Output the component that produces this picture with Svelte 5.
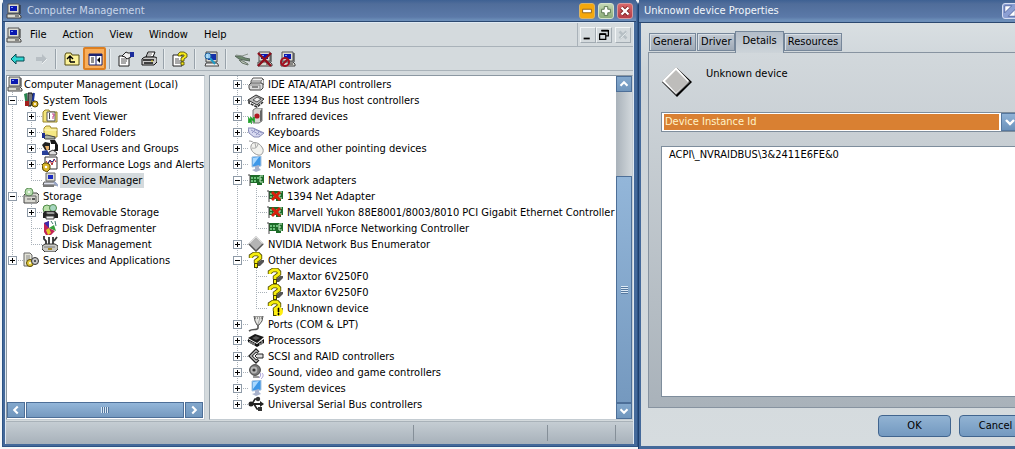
<script lang="ts">
  interface TreeNode {
    label: string;
    icon: string;
    state?: 'open' | 'closed';
    selected?: boolean;
    children?: TreeNode[];
  }

  const questionMark =
    '<path d="M8 12l5-4h3v2l-4 4H8z" fill="#555"/><path d="M3 6V4l3-2h4l2 2v2L8 9v2" fill="none" stroke="#4a4400" stroke-width="4.4"/><path d="M6 11h4v5H6z" fill="#4a4400"/><path d="M3 6V4l3-2h4l2 2v2L8 9v2" fill="none" stroke="#f6ee10" stroke-width="2.8"/><path d="M7 12h2v3H7z" fill="#f6ee10"/>';
  const card =
    '<path d="M2 3h14v8h-2v2H9v-2H2z" fill="#1d6b28"/><path d="M3 5h2v2H3zM6 5h2v2H6zM9 5h2v2H9zM3 8h2v2H3zM6 8h2v2H6z" fill="#6cc079"/><path d="M0 3h2v11" fill="none" stroke="#444"/><path d="M15 4h-3v6h3M12 7h2" fill="none" stroke="#c8f0c8"/>';
  const pc =
    '<path d="M2 1h11v9H2z" fill="#dcdcd4" stroke="#555"/><path d="M4 3h7v5H4z" fill="#0a18b0"/><path d="M5 4h2v1H5z" fill="#7f9cff"/><path d="M1 11h12l2 2v2H1z" fill="#d8d8d0" stroke="#444"/><path d="M9 13h4" stroke="#333"/><path d="M14 2v9" stroke="#222"/>';
  const disk =
    '<path d="M5 2h9l2 2v4l-2 1H3V5z" fill="#f0f0f0" stroke="#555"/><path d="M3 5h10v4M13 5l2-2" fill="none" stroke="#777"/><path d="M3 7h10l2 1v4l-2 2H2l-1-2V9z" fill="#ddd" stroke="#444"/><path d="M2 9h10v4" fill="none" stroke="#888"/><path d="M4 11h6" stroke="#333"/>';
  const monitor =
    '<path d="M4 1l9-1v10l-9 1z" fill="#3d97e8" stroke="#a9c3de"/><path d="M5 2l6-1-6 8z" fill="#a9d8ff"/><path d="M7 10l4-1v3l2 2-5 2-4-2 3-1z" fill="#a8b2cc"/>';

  const icons: Record<string, string> = {
    pc,
    disk,
    monitor,
    card,
    question: questionMark,
    cardOff: card + '<path d="M5 4l8 8M13 4l-8 8" stroke="#d8200c" stroke-width="2.8"/>',
    unknown:
      questionMark +
      '<circle cx="11.5" cy="11.5" r="4.5" fill="#ffee10"/><path d="M11 8h1v4h-1zM11 13h1v2h-1z" fill="#000" stroke="#000" stroke-width=".6"/>',
    tools:
      '<path d="M1 2l3-1 1 13H3z" fill="#27854e"/><path d="M5 1h4l1 4-2 9H5z" fill="#777" stroke="#111"/><path d="M11 1l-1 7 2 3" stroke="#1c35a0" stroke-width="2" fill="none"/><path d="M2 9h4v5H2z" fill="#a3201c"/><circle cx="12" cy="12" r="3" fill="#d8b22a" stroke="#5b4a00"/><circle cx="12" cy="12" r="1" fill="#fff"/>',
    events:
      '<path d="M1 4l2-2h4l1 2h7v10H1z" fill="#f3e57a" stroke="#97842a"/><path d="M5 4h8v9H5z" fill="#fff" stroke="#555"/><path d="M7 6h1M7 8h1M7 10h1" stroke="#111" stroke-width="1.4"/><path d="M10 6h2v2h-1v3" stroke="#c03c8c" fill="none"/>',
    folder:
      '<path d="M2 4l2-2h4l1 2h6v9H2z" fill="#f5e884" stroke="#a08a2c"/><path d="M2 6h13" stroke="#fff8c0"/><path d="M0 12l5-1 4 1 4 1v2H3z" fill="#a8b0a4" stroke="#444"/><path d="M0 9h3v5H0z" fill="#1b2d8f"/>',
    users:
      '<path d="M8 0h5l3 5v6h-5z" fill="#181818"/><path d="M9 4h4v5l-2 2-2-2z" fill="#fff"/><path d="M0 5l3-3 5 1v7H3z" fill="#222"/><path d="M3 6h4v3l-2 2z" fill="#e9b26a"/><path d="M0 11l5-1 3 5H0z" fill="#28409a"/><path d="M7 12l4-2 4 3-1 2H7z" fill="#dedede" stroke="#333"/>',
    perf:
      '<path d="M3 1h12v12H3z" fill="#fff" stroke="#333"/><path d="M4 5l2 3 2-4 2 5 2-6 2 3" stroke="#b3262c" fill="none"/><path d="M5 9l3-5 2 2 3-3" stroke="#23308f" fill="none"/><path d="M0 9l2-2h3l3 2v4l-3 3-4-2z" fill="#d9b52a" stroke="#5b4a00"/><circle cx="4" cy="11" r="1.3" fill="#fff"/>',
    device:
      '<path d="M4 1h9v8H4z" fill="#dcdcd4" stroke="#666"/><path d="M6 3h5v4H6z" fill="#1c2cc0"/><path d="M2 10h11l2 3H1z" fill="#dfe2ee" stroke="#555"/><path d="M1 14h11" stroke="#777" stroke-width="2"/><path d="M12 10l4 4" stroke="#98a6c8" stroke-width="2"/>',
    storage:
      '<path d="M3 5h11l2 2v6l-2 2H1V7z" fill="#d7d7d0" stroke="#444"/><circle cx="6" cy="4" r="4" fill="#b8dcb0" stroke="#60945a"/><circle cx="6" cy="4" r="1" fill="#fff"/><path d="M2 8h11v6M4 11h4" fill="none" stroke="#666"/><path d="M9 10h3v2H9z" fill="#555"/>',
    removable:
      '<circle cx="5" cy="5" r="4" fill="#b9e0a8" stroke="#4f8a48"/><circle cx="11" cy="4" r="3.5" fill="#a6d5c0" stroke="#4f8a48"/><path d="M3 7h10l3 3v4H1V9z" fill="#222"/><path d="M4 8h8l1 2H5zM4 12h8v3H4z" fill="#eee" stroke="#444"/>',
    defrag:
      '<path d="M2 3l5-2v7l6 3-4 4H4l-2-3z" fill="#c22456"/><path d="M2 3l5-2v7z" fill="#3c2cae"/><path d="M7 8l5-3 2 6z" fill="#36a03b"/><path d="M4 10l3-2 2 5-3 2z" fill="#e6c92a"/><path d="M9 1l2 3M13 1l1 5" stroke="#3f7b6c"/>',
    manage:
      '<path d="M2 0v3l2 2v3M7 1v7M11 1v7M15 1l-3 4" stroke="#333" stroke-width="1.8" fill="none"/><path d="M3 8h10l3 2v3l-3 3H3l-3-3v-3z" fill="#c9c9c4" stroke="#333"/><path d="M2 11h11" stroke="#777"/><path d="M6 13h4" stroke="#a5882a" stroke-width="2"/>',
    services:
      '<path d="M1 1h6l2 2v11H1z" fill="#e4e4d8" stroke="#666"/><path d="M3 4h4M3 6h4M3 8h3" stroke="#888"/><circle cx="7" cy="11" r="3.5" fill="#e1c93c" stroke="#5b4a00"/><circle cx="12" cy="9" r="3.5" fill="#c7c7c7" stroke="#333"/><circle cx="7" cy="11" r="1" fill="#fff"/><circle cx="12" cy="9" r="1" fill="#333"/>',
    firewire:
      '<path d="M0 8l8-5 8 4-7 6z" fill="#bdbdbd" stroke="#333"/><path d="M5 8l4-3 4 2-4 3z" fill="#eee" stroke="#555"/><path d="M1 9v2l8 4 6-5" stroke="#333" fill="none" stroke-width="1.6" stroke-dasharray="3 1"/>',
    infrared:
      '<path d="M5 2l3-2h6v13l-3 2H5z" fill="#d6d6d2" stroke="#777"/><path d="M12 3v11l2-2V1z" fill="#666"/><circle cx="9" cy="8" r="2.6" fill="#b01820"/><path d="M1 15v-4l2 3v-4l3 3V9" stroke="#1fa02a" stroke-width="1.7" fill="none"/>',
    keyboard:
      '<path d="M0 4l5 0 11 5-5 4H6l-5-4z" fill="#d7d9f0" stroke="#8488b4"/><path d="M3 6l9 5M6 5l8 4M4 9l4-4M8 11l4-4" stroke="#9296c4"/>',
    mouse:
      '<path d="M1 1c3 0 4 1 6 3" stroke="#999" fill="none"/><path d="M3 6c1-5 8-5 12 3 1 4-2 7-5 6-4-1-8-5-7-9z" fill="#f2f2ee" stroke="#999"/><path d="M4 8c4 1 5-1 6-4M8 8l-1-5" stroke="#aaa" fill="none"/>',
    diamond:
      '<path d="M8 0l8 8-8 8-8-8z" fill="#b4b4b4"/><path d="M1 8l7-7 7 7" stroke="#ddd" fill="none"/><path d="M1 8l7 7 7-7" stroke="#555" stroke-width="1.4" fill="none"/>',
    port:
      '<path d="M6 0h9l-1 5-3 4H9L7 5z" fill="#e4e4e0" stroke="#555"/><path d="M7 2h7" stroke="#444" stroke-dasharray="1 1"/><path d="M12 2l-2 6" stroke="#aaa"/><path d="M10 9v3c-1 3-5 0-9 3" stroke="#555" stroke-width="1.6" fill="none"/>',
    chip:
      '<path d="M0 6l7-4 9 3-7 6z" fill="#181818"/><path d="M4 6l4-2 4 2-4 2z" fill="#555"/><path d="M0 7l9 5 7-5v4l-7 4-9-5z" fill="#111"/><path d="M2 11v-2M4 12v-2M6 14v-3M12 14v-3M14 12v-3" stroke="#fff" stroke-width=".8"/>',
    scsi:
      '<path d="M11 4L8 1 1 8l7 7 3-3" fill="none" stroke="#222" stroke-width="1.4"/><path d="M10 5L8 4 4 8l4 4 2-1" fill="none" stroke="#444" stroke-width="1.4"/><path d="M7 8l2-2h6v4H9z" fill="#ddd" stroke="#222"/>',
    sound:
      '<circle cx="7" cy="6" r="5.4" fill="#777" stroke="#444"/><circle cx="6" cy="6" r="3.4" fill="#b4b4b4"/><circle cx="6" cy="6" r="1.6" fill="#333"/><path d="M5 12h6l1 2H5z" fill="#999"/><path d="M12 9c1 1 1 3-1 5M14 9c2 2 1 4-1 6" stroke="#a79cd6" fill="none"/>',
    usb:
      '<path d="M1 8h13" stroke="#222" stroke-width="2"/><path d="M12 5l4 3-4 3z" fill="#222"/><circle cx="3" cy="8" r="2.5" fill="#222"/><path d="M4 8l3-5h3M6 8l3 5h3" stroke="#222" stroke-width="1.6" fill="none"/><circle cx="10" cy="3" r="2.2" fill="#333"/><path d="M10 11h4v4h-4z" fill="#333"/>',
    back: '<path d="M1 8l5-5v3h8v4H6v3z" fill="#2fd7d3" stroke="#064a52"/>',
    forward: '<path d="M14 8L9 3v3H3v4h6v3z" fill="#b8bfc4"/><path d="M9 13l5-5" stroke="#eef1f2"/>',
    up: '<path d="M1 4l1-2h5l1 2h7v10H1z" fill="#fbf29a" stroke="#554c10"/><path d="M6 11V6M3 8l3-3 3 3M6 11h5" fill="none" stroke="#000" stroke-width="1.4"/>',
    panes:
      '<path d="M2 3h13v11H2z" fill="#fff" stroke="#1b2270"/><path d="M2 4h13" stroke="#1b2270" stroke-width="2"/><path d="M9 4v10" stroke="#1b2270"/><path d="M4 7h3M4 9h3M4 11h3" stroke="#222"/><path d="M13 6v6l-3-3z" fill="#000"/>',
    properties:
      '<path d="M1 5h10v10H1z" fill="#fff" stroke="#222"/><path d="M3 8h6M3 10h6M3 12h5" stroke="#555"/><path d="M4 5l4-4 2 1h3v4l-4 2-2-2z" fill="#eee" stroke="#222"/><path d="M12 1h4v5h-4z" fill="#1b2c9c"/>',
    print:
      '<path d="M5 6l2-5h7l-2 5z" fill="#fff" stroke="#111"/><path d="M2 7l2-1h10l2 1v4l-3 3H1V8z" fill="#c9c9c9" stroke="#111"/><path d="M2 9h11M3 12h9" stroke="#111" stroke-width="1.5"/><path d="M10 10h2" stroke="#e8d420"/><path d="M7 3h4M6 5h4" stroke="#777"/>',
    help:
      '<path d="M1 4h9v11H1z" fill="#fff" stroke="#222"/><path d="M3 8h4M3 10h6M3 12h6" stroke="#555"/><path d="M6 5V3l2-2h4l3 2v3l-3 2v2H9V7l3-2V4H9v1zM9 11h3v3H9z" fill="#f6ea1c" stroke="#4d4600" stroke-width=".8"/>',
    scan:
      '<path d="M3 1h11v10H3z" fill="#dcdcd4" stroke="#444"/><path d="M5 3h8v6H5z" fill="#1430a8"/><path d="M3 12h11l2 3H2z" fill="#eee" stroke="#444"/><circle cx="5" cy="5" r="3" fill="#a8e0ff" fill-opacity=".85" stroke="#1d5f9c"/><path d="M7 7l5 6" stroke="#1d9cc8" stroke-width="2"/>',
    enable:
      '<path d="M1 5h6l4 2 5 1v2l-6-1-5-1z" fill="#6d8a6d" stroke="#56665a"/><path d="M5 9l4 1 5 3v1l-6-2z" fill="#bfc8bb" stroke="#69766a"/><path d="M2 4l6 1 6-2" stroke="#8a948c" fill="none"/>',
    remove: pc + '<path d="M1 2l13 13M14 2L1 15" stroke="#8e0f1c" stroke-width="2.4"/>',
    disable: pc + '<circle cx="5" cy="11" r="4" fill="none" stroke="#a01020" stroke-width="2"/><path d="M2 14l6-6" stroke="#a01020" stroke-width="2"/>',
    left: '<path d="M10 4L6 8l4 4" fill="none" stroke="#fff" stroke-width="2.4"/>',
    right: '<path d="M6 4l4 4-4 4" fill="none" stroke="#fff" stroke-width="2.4"/>',
    chevronUp: '<path d="M4 10l4-4 4 4" fill="none" stroke="#fff" stroke-width="2.4"/>',
    chevronDown: '<path d="M4 6l4 4 4-4" fill="none" stroke="#fff" stroke-width="2.4"/>',
    minus: '<path d="M3 6h10v4H3z" fill="#fff" stroke="#8a5a10"/>',
    plus: '<path d="M6 3h4v3h3v4h-3v3H6v-3H3V6h3z" fill="#fff" stroke="#4d6b45"/>',
    cross: '<path d="M4 4l8 8M12 4l-8 8" stroke="#7a2020" stroke-width="4.6"/><path d="M4 4l8 8M12 4l-8 8" stroke="#fff" stroke-width="2.8"/>',
    mdiMin: '<path d="M3 11h7v2H3z" fill="#000"/>',
    mdiRestore: '<path d="M5 3h8v6h-3M3 7h7v6H3z" fill="none" stroke="#000" stroke-width="1.4"/><path d="M5 3h8M3 7h7" stroke="#000" stroke-width="2"/>',
    mdiClose: '<path d="M4 4l8 8M12 4l-8 8" stroke="#b6bfc4" stroke-width="3"/><path d="M5 12l7-7" stroke="#eef2f3"/>',
    contextHelp: '<path d="M2 2h8l-8 8zM14 6v8H6z" fill="#fff" stroke="#4b5f9c"/>'
  };

  const consoleTree: TreeNode[] = [
    {
      label: 'System Tools',
      icon: 'tools',
      state: 'open',
      children: [
        {label: 'Event Viewer', icon: 'events', state: 'closed'},
        {label: 'Shared Folders', icon: 'folder', state: 'closed'},
        {label: 'Local Users and Groups', icon: 'users', state: 'closed'},
        {label: 'Performance Logs and Alerts', icon: 'perf', state: 'closed'},
        {label: 'Device Manager', icon: 'device', selected: true}
      ]
    },
    {
      label: 'Storage',
      icon: 'storage',
      state: 'open',
      children: [
        {label: 'Removable Storage', icon: 'removable', state: 'closed'},
        {label: 'Disk Defragmenter', icon: 'defrag'},
        {label: 'Disk Management', icon: 'manage'}
      ]
    },
    {label: 'Services and Applications', icon: 'services', state: 'closed'}
  ];

  const deviceTree: TreeNode[] = [
    {label: 'IDE ATA/ATAPI controllers', icon: 'disk', state: 'closed'},
    {label: 'IEEE 1394 Bus host controllers', icon: 'firewire', state: 'closed'},
    {label: 'Infrared devices', icon: 'infrared', state: 'closed'},
    {label: 'Keyboards', icon: 'keyboard', state: 'closed'},
    {label: 'Mice and other pointing devices', icon: 'mouse', state: 'closed'},
    {label: 'Monitors', icon: 'monitor', state: 'closed'},
    {
      label: 'Network adapters',
      icon: 'card',
      state: 'open',
      children: [
        {label: '1394 Net Adapter', icon: 'cardOff'},
        {label: 'Marvell Yukon 88E8001/8003/8010 PCI Gigabit Ethernet Controller', icon: 'cardOff'},
        {label: 'NVIDIA nForce Networking Controller', icon: 'card'}
      ]
    },
    {label: 'NVIDIA Network Bus Enumerator', icon: 'diamond', state: 'closed'},
    {
      label: 'Other devices',
      icon: 'question',
      state: 'open',
      children: [
        {label: 'Maxtor 6V250F0', icon: 'question'},
        {label: 'Maxtor 6V250F0', icon: 'question'},
        {label: 'Unknown device', icon: 'unknown'}
      ]
    },
    {label: 'Ports (COM & LPT)', icon: 'port', state: 'closed'},
    {label: 'Processors', icon: 'chip', state: 'closed'},
    {label: 'SCSI and RAID controllers', icon: 'scsi', state: 'closed'},
    {label: 'Sound, video and game controllers', icon: 'sound', state: 'closed'},
    {label: 'System devices', icon: 'monitor', state: 'closed'},
    {label: 'Universal Serial Bus controllers', icon: 'usb', state: 'closed'}
  ];

  const menus = ['File', 'Action', 'View', 'Window', 'Help'];

  const toolGroups = [
    ['back', 'forward'],
    ['up', 'panes'],
    ['properties', 'print'],
    ['help'],
    ['scan'],
    ['enable', 'remove', 'disable']
  ];

  const tabs = ['General', 'Driver', 'Details', 'Resources'];
  let activeTab = $state('Details');
  let instanceId = $state('ACPI\\_NVRAIDBUS\\3&2411E6FE&0');
</script>

{#snippet icon(name: string)}
  <svg class="icon" viewBox="0 0 16 16" aria-hidden="true">{@html icons[name]}</svg>
{/snippet}

{#snippet tree(nodes: TreeNode[])}
  <ul class="tree">
    {#each nodes as node}
      <li>
        <div class="node">
          <span class="branch">
            {#if node.state}
              <button class="expander" class:closed={node.state === 'closed'} aria-label="Toggle {node.label}"></button>
            {/if}
          </span>
          {@render icon(node.icon)}
          <span class="label" class:selected={node.selected}>{node.label}</span>
        </div>
        {#if node.children}
          {@render tree(node.children)}
        {/if}
      </li>
    {/each}
  </ul>
{/snippet}

<div class="desktop">
  <section class="window console">
    <header class="titlebar">
      {@render icon('pc')}
      <h1>Computer Management</h1>
      <button class="caption minimize" aria-label="Minimize">{@render icon('minus')}</button>
      <button class="caption maximize" aria-label="Maximize">{@render icon('plus')}</button>
      <button class="caption close" aria-label="Close">{@render icon('cross')}</button>
    </header>

    <div class="client">
      <nav class="menubar">
        {@render icon('pc')}
        {#each menus as menu}
          <button class="menu">{menu}</button>
        {/each}
        <div class="mdi">
          <button aria-label="Minimize view">{@render icon('mdiMin')}</button>
          <button aria-label="Restore view">{@render icon('mdiRestore')}</button>
          <button class="mdi-close" aria-label="Close view" disabled>{@render icon('mdiClose')}</button>
        </div>
      </nav>

      <div class="toolbar">
        {#each toolGroups as group}
          <div class="group">
            {#each group as tool}
              <button class="tool" class:pressed={tool === 'panes'} aria-label={tool}>{@render icon(tool)}</button>
            {/each}
          </div>
        {/each}
      </div>

      <div class="panes">
        <div class="pane scope">
          <div class="node root">
            {@render icon('pc')}
            <span class="label">Computer Management (Local)</span>
          </div>
          {@render tree(consoleTree)}
          <div class="scrollbar horizontal">
            <button class="arrow" aria-label="Scroll left">{@render icon('left')}</button>
            <div class="thumb"><span class="grip"></span></div>
            <button class="arrow" aria-label="Scroll right">{@render icon('right')}</button>
          </div>
        </div>

        <div class="pane result">
          <div class="devices">
            {@render tree(deviceTree)}
          </div>
          <div class="scrollbar vertical">
            <button class="arrow" aria-label="Scroll up">{@render icon('chevronUp')}</button>
            <div class="track"></div>
            <div class="thumb"><span class="grip"></span></div>
            <button class="arrow" aria-label="Scroll down">{@render icon('chevronDown')}</button>
          </div>
        </div>
      </div>

      <footer class="statusbar">
        <span class="status-main"></span>
        <span class="status-mid"></span>
        <span class="status-side"></span>
        <span class="status-grip"></span>
      </footer>
    </div>
  </section>

  <section class="window dialog">
    <header class="titlebar">
      <h2>Unknown device Properties</h2>
      <button class="caption context" aria-label="Help">{@render icon('contextHelp')}</button>
      <button class="caption close" aria-label="Close">{@render icon('cross')}</button>
    </header>

    <div class="sheet">
      <div class="tabs" role="tablist">
        {#each tabs as tab}
          <button
            class="tab"
            class:active={tab === activeTab}
            role="tab"
            aria-selected={tab === activeTab}
            onclick={() => (activeTab = tab)}>{tab}</button>
        {/each}
      </div>

      <div class="page" role="tabpanel">
        <div class="device">
          <svg class="device-icon" viewBox="0 0 32 32" aria-hidden="true">
            <path d="M16 2l15 14-15 15L1 16z" fill="#000" />
            <path d="M15 1l14 15-14 13L1 15z" fill="#777" />
            <path d="M15 1l13 14-13 13L1 15z" fill="#fff" />
            <path d="M15 4l12 12-12 11L4 15z" fill="#bebdbb" />
          </svg>
          <span>Unknown device</span>
        </div>

        <div class="combo">
          <select aria-label="Property">
            <option>Device Instance Id</option>
          </select>
          <span class="drop">{@render icon('chevronDown')}</span>
        </div>

        <textarea aria-label="Value" readonly spellcheck="false" bind:value={instanceId}></textarea>
      </div>

      <div class="actions">
        <button>OK</button>
        <button>Cancel</button>
      </div>
    </div>
  </section>
</div>

<style>
  :global(body) {
    background: #f4f7f9;
    color: #000;
    font-family: 'DejaVu Sans Condensed', 'DejaVu Sans', sans-serif;
    font-size: 11px;
    line-height: 16px;
    overflow: hidden;
  }

  button,
  select,
  textarea {
    border: none;
    border-radius: 0;
    color: inherit;
    font: inherit;
    margin: 0;
    padding: 0;
  }

  button {
    background: none;
  }

  .desktop {
    display: flex;
    padding-left: 2px;
  }

  .icon {
    display: block;
    flex: none;
    height: 16px;
    width: 16px;
  }

  .window {
    background: #44699a;
    box-sizing: border-box;
    display: flex;
    flex-direction: column;
  }

  .console {
    border: solid #2d5486;
    border-width: 0 1px 1px;
    border-radius: 5px 5px 0 0;
    flex: 1;
    margin-bottom: 2px;
    min-width: 0;
    padding: 0 3px 2px 2px;
  }

  /* the dialog hangs over the right edge of the screen */
  .dialog {
    border-left: 1px solid #1f3f6d;
    border-radius: 5px 5px 0 0;
    flex: 0 0 404px;
    margin-right: -27px;
    padding: 0 2px 3px;
  }

  .titlebar {
    align-items: center;
    background: linear-gradient(#3e6193 0, #506d9a 4px, #5b79a8 17px, #6b8db8 20px);
    border-bottom: 1px solid #2b4870;
    box-sizing: border-box;
    display: flex;
    flex: none;
    gap: 3px;
    height: 22px;
    margin: 0 -2px;
    padding: 0 3px;
  }

  .dialog .titlebar {
    height: 23px;
    padding-right: 5px;
  }

  h1,
  h2 {
    color: #c8d5e8;
    flex: 1;
    font-size: 11px;
    font-weight: normal;
    margin: 0;
    padding-left: 2px;
  }

  h2 {
    color: #f2f6fb;
  }

  .caption {
    border: 1px solid #6d6a58;
    border-radius: 3px;
    box-sizing: border-box;
    height: 16px;
    width: 16px;
  }

  .caption .icon {
    height: 14px;
    width: 14px;
  }

  .minimize {
    background: #f5a80c;
    border-color: #d8b46a;
  }

  .maximize {
    background: linear-gradient(#c3d8b4, #8bab78);
    border-color: #d4e2cb;
  }

  .close {
    background: linear-gradient(#d9686a, #b63c46);
    border-color: #d59a9f;
  }

  .context {
    background: #8b9fd3;
    border-color: #d5ddf2;
  }

  .client {
    background: #d4dadd;
    border: 1px solid #dfe9f2;
    border-bottom: none;
    display: flex;
    flex: 1;
    flex-direction: column;
  }

  .menubar,
  .toolbar {
    align-items: center;
    border-bottom: 1px solid #a9b2b9;
    box-sizing: border-box;
    display: flex;
    height: 24px;
  }

  .menubar {
    padding: 0 2px 0 0;
  }

  .menu {
    padding: 0 8px;
  }

  .mdi {
    align-items: center;
    align-self: stretch;
    border-left: 1px solid #a9b2b9;
    display: flex;
    margin-left: auto;
    padding-left: 2px;
  }

  .mdi button {
    border: 1px solid;
    border-color: #f2f5f6 #a2abb2 #a2abb2 #f2f5f6;
    box-sizing: border-box;
    height: 16px;
    overflow: hidden;
    width: 16px;
  }

  .mdi .icon {
    height: 14px;
    width: 14px;
  }

  .mdi .mdi-close {
    margin-left: 3px;
  }

  .group {
    align-items: center;
    display: flex;
  }

  .group + .group::before {
    background: #98a2aa;
    border-right: 1px solid #e8edef;
    content: '';
    height: 20px;
    margin: 0 3px;
    width: 1px;
  }

  .tool {
    align-items: center;
    box-sizing: border-box;
    display: flex;
    height: 23px;
    justify-content: center;
    width: 23px;
  }

  .tool.pressed {
    background: #f9ae5a;
    border: 2px solid #dc7f22;
    border-radius: 2px;
  }

  .panes {
    display: flex;
    flex: 1;
    gap: 4px;
    padding: 4px 0 1px;
  }

  .pane {
    background: #fff;
    border: 1px solid;
    border-color: #8c98a2 #c4ccd2 #c4ccd2 #8c98a2;
    box-sizing: border-box;
    display: flex;
  }

  .scope {
    flex: 0 0 199px;
    flex-direction: column;
    min-width: 0;
    white-space: nowrap;
  }

  .scope .tree {
    padding-left: 1px;
  }

  .scope .tree .tree {
    padding-left: 19px;
  }

  .result {
    flex: 1;
    min-width: 0;
  }

  .devices {
    flex: 1;
    min-width: 0;
    overflow: hidden;
    padding: 0 0 7px 23px;
    white-space: nowrap;
  }

  .tree {
    list-style: none;
    margin: 0;
    padding: 0;
  }

  .tree .tree {
    padding-left: 19px;
  }

  /* dotted guide running down the middle of the expander column */
  li {
    background: repeating-linear-gradient(#a8b0b8 0 1px, transparent 1px 2px) 4px 0 / 1px 100% no-repeat;
  }

  li:last-child {
    background-size: 1px 8px;
  }

  .node {
    align-items: center;
    display: flex;
    height: 16px;
  }

  .branch {
    align-items: center;
    background: repeating-linear-gradient(90deg, #a8b0b8 0 1px, transparent 1px 2px) 4px 8px / 11px 1px no-repeat;
    display: flex;
    flex: none;
    height: 16px;
    width: 15px;
  }

  .expander {
    background:
      linear-gradient(#000, #000) center / 5px 1px no-repeat,
      #fff;
    border: 1px solid #8f9ba8;
    box-sizing: border-box;
    height: 9px;
    width: 9px;
  }

  .expander.closed {
    background:
      linear-gradient(#000, #000) center / 5px 1px no-repeat,
      linear-gradient(#000, #000) center / 1px 5px no-repeat,
      #fff;
  }

  .label {
    line-height: 15px;
    margin-left: 2px;
    padding: 0 2px;
  }

  .root .label {
    margin-left: 0;
    padding-left: 1px;
  }

  .selected {
    background: #d4dadd;
  }

  .scrollbar {
    display: flex;
  }

  .horizontal {
    gap: 1px;
    margin: auto 1px 1px 0;
  }

  .vertical {
    background: linear-gradient(90deg, #a9b2ba, #d2d8dc);
    flex: 0 0 16px;
    flex-direction: column;
  }

  .arrow {
    background: linear-gradient(#83a8cd, #7096bd);
    border: 1px solid #4d6f98;
    box-sizing: border-box;
    flex: none;
    height: 16px;
    width: 16px;
  }

  .horizontal .arrow {
    padding-left: 1px;
    width: 18px;
  }

  .arrow .icon {
    height: 14px;
    width: 14px;
  }

  .thumb {
    align-items: center;
    background: linear-gradient(#93b6d9, #7599bf);
    border: 1px solid #4d6f98;
    display: flex;
    flex: 1;
    justify-content: center;
  }

  .track {
    flex: 3;
  }

  .vertical .thumb {
    flex: 8;
  }

  .grip {
    background: repeating-linear-gradient(90deg, #dce9f5 0 1px, #55789f 1px 2px);
    height: 6px;
    width: 8px;
  }

  .vertical .grip {
    background: repeating-linear-gradient(#dce9f5 0 1px, #55789f 1px 2px);
    height: 8px;
    width: 7px;
  }

  .statusbar {
    background: linear-gradient(#c5cdd3, #a7b1ba);
    border-top: 1px solid #a9b2b9;
    display: flex;
    height: 22px;
  }

  .statusbar span {
    border-right: 1px solid #858f98;
    margin: 3px 0;
  }

  .status-main {
    flex: 1;
  }

  .status-mid {
    flex: 0 0 133px;
  }

  .status-side {
    flex: 0 0 67px;
  }

  .statusbar .status-grip {
    border: none;
    flex: 0 0 17px;
  }

  .sheet {
    background: linear-gradient(#d9dfe2, #ccd3d8 50px, #d6dcdf);
    display: flex;
    flex: 1;
    flex-direction: column;
    padding: 8px 7px 9px;
  }

  .tabs {
    align-items: flex-end;
    display: flex;
    gap: 1px;
    padding-left: 1px;
  }

  .tab {
    background: linear-gradient(#c2cad3, #9faab7);
    border: 1px solid #76879a;
    box-shadow: inset 1px 1px #d9e0e6;
    height: 18px;
    line-height: 16px;
    margin-bottom: 1px;
    padding: 0 3px;
  }

  .tab.active {
    background: linear-gradient(#b3bdc9, #cdd4d9);
    border-bottom: none;
    box-shadow: none;
    height: 22px;
    margin: 0 -1px -1px;
    padding: 0 6px 4px;
    z-index: 1;
  }

  .page {
    background: linear-gradient(#d2d8dc, #a9b2ba);
    border: 1px solid #8793a0;
    display: flex;
    flex: 1;
    flex-direction: column;
    padding: 13px 12px 10px;
  }

  .device {
    align-items: flex-start;
    display: flex;
    gap: 13px;
    margin-bottom: 14px;
  }

  .device-icon {
    flex: none;
    height: 32px;
    width: 32px;
  }

  .combo {
    background: #fff;
    border: 1px solid #7e8d9c;
    display: flex;
    gap: 3px;
    margin-bottom: 14px;
    padding: 1px 1px 1px 2px;
  }

  select {
    appearance: none;
    background: #d98032;
    color: #fff3c8;
    flex: 1;
    height: 16px;
    outline: 1px solid #fff;
    padding-left: 1px;
  }

  .drop {
    background: linear-gradient(#8fb2d6, #6b92bb);
    outline: 1px solid #56789f;
    pointer-events: none;
  }

  textarea {
    background: #fff;
    border: 1px solid #7e8d9c;
    flex: 1;
    outline: none;
    padding: 0 7px;
    resize: none;
  }

  .actions {
    display: flex;
    gap: 8px;
    justify-content: flex-end;
    padding: 7px 1px 0 0;
  }

  .actions button {
    background: linear-gradient(#92b3d3, #7399c0);
    border: 1px solid #41658f;
    border-radius: 4px;
    box-sizing: border-box;
    height: 22px;
    width: 73px;
  }
</style>
